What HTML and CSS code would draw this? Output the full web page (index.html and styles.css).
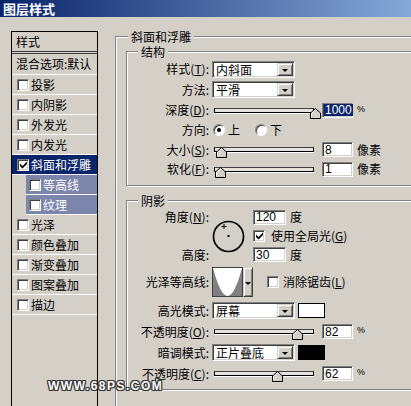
FILE: index.html
```html
<!DOCTYPE html>
<html lang="zh-CN">
<head>
<meta charset="utf-8">
<title>图层样式</title>
<link rel="stylesheet" href="styles.css">
</head>
<body>
<div class="window">
  <div class="titlebar">图层样式</div>
  <div class="client">
    <div class="stylelist">
      <div class="list-head">样式</div>
      <div class="list-blend">混合选项:默认</div>
      <div class="item"><span class="cb"></span>投影</div>
      <div class="item"><span class="cb"></span>内阴影</div>
      <div class="item"><span class="cb"></span>外发光</div>
      <div class="item"><span class="cb"></span>内发光</div>
      <div class="item selected"><span class="cb"><svg width="7" height="8" viewBox="0 0 7 8"><path d="M0 2.5L2.5 5L7 0.5V3L2.5 7.5L0 5Z" fill="#000"/></svg></span>斜面和浮雕</div>
      <div class="item sub"><span class="cb"></span>等高线</div>
      <div class="item sub"><span class="cb"></span>纹理</div>
      <div class="item"><span class="cb"></span>光泽</div>
      <div class="item"><span class="cb"></span>颜色叠加</div>
      <div class="item"><span class="cb"></span>渐变叠加</div>
      <div class="item"><span class="cb"></span>图案叠加</div>
      <div class="item"><span class="cb"></span>描边</div>
    </div>
    <fieldset class="group outer">
      <legend>斜面和浮雕</legend>
      <fieldset class="group inner">
        <legend>结构</legend>
        <div class="form structure">
          <div class="row"><span class="label">样式(<u>T</u>):</span><div class="select"><span class="val">内斜面</span><span class="btn"></span></div></div>
          <div class="row"><span class="label">方法:</span><div class="select"><span class="val">平滑</span><span class="btn"></span></div></div>
          <div class="row"><span class="label">深度(<u>D</u>):</span>
            <div class="slider"><div class="track"></div><div class="rail"><span class="thumb" style="left:99%"><svg width="11" height="11" viewBox="0 0 11 11"><path d="M0.5 10.5V5L5.5 0.5L10.5 5V10.5Z" fill="#d4d0c8" stroke="#000"/><path d="M1.5 9.5V5.4L5.5 1.8" fill="none" stroke="#fff"/></svg></span></div></div>
            <span class="num"><span class="hl">1000</span></span><span class="unit pct">%</span></div>
          <div class="row"><span class="label">方向:</span><span class="radio on"></span><span class="opt">上</span><span class="radio second"></span><span class="opt">下</span></div>
          <div class="row"><span class="label">大小(<u>S</u>):</span>
            <div class="slider"><div class="track"></div><div class="rail"><span class="thumb" style="left:3%"><svg width="11" height="11" viewBox="0 0 11 11"><path d="M0.5 10.5V5L5.5 0.5L10.5 5V10.5Z" fill="#d4d0c8" stroke="#000"/><path d="M1.5 9.5V5.4L5.5 1.8" fill="none" stroke="#fff"/></svg></span></div></div>
            <span class="num">8</span><span class="unit">像素</span></div>
          <div class="row"><span class="label">软化(<u>F</u>):</span>
            <div class="slider"><div class="track"></div><div class="rail"><span class="thumb" style="left:2%"><svg width="11" height="11" viewBox="0 0 11 11"><path d="M0.5 10.5V5L5.5 0.5L10.5 5V10.5Z" fill="#d4d0c8" stroke="#000"/><path d="M1.5 9.5V5.4L5.5 1.8" fill="none" stroke="#fff"/></svg></span></div></div>
            <span class="num">1</span><span class="unit">像素</span></div>
        </div>
      </fieldset>
      <fieldset class="group inner shadow">
        <legend>阴影</legend>
        <div class="form shading">
          <div class="angle">
            <span class="label a1">角度(<u>N</u>):</span>
            <svg class="dial" width="33" height="33" viewBox="0 0 33 33"><circle cx="16.5" cy="16.5" r="15" fill="none" stroke="#000" stroke-width="1.7"/><rect x="15.5" y="15" width="2" height="2" fill="#000"/><path d="M12 4v5M9.5 6.5h5" stroke="#000" stroke-width="1"/></svg>
            <div class="ctl c1"><span class="num wide">120</span><span class="unit">度</span></div>
            <div class="ctl c2"><span class="cb"><svg width="7" height="8" viewBox="0 0 7 8"><path d="M0 2.5L2.5 5L7 0.5V3L2.5 7.5L0 5Z" fill="#000"/></svg></span><span class="cbtext">使用全局光(<u>G</u>)</span></div>
            <span class="label a3">高度:</span>
            <div class="ctl c3"><span class="num wide">30</span><span class="unit">度</span></div>
          </div>
          <div class="row"><span class="label">光泽等高线:</span>
            <div class="contour"><svg width="31" height="30" viewBox="0 0 31 30"><rect x="0.5" y="0.5" width="30" height="29" fill="#808080" stroke="#404040"/><path d="M1 1Q8.5 29 15.5 29Q22.5 29 30 1Z" fill="#fff"/></svg><span class="cbtn"></span></div>
            <span class="cb aa"></span><span class="cbtext">消除锯齿(<u>L</u>)</span></div>
          <div class="row"><span class="label">高光模式:</span><div class="select"><span class="val">屏幕</span><span class="btn"></span></div><span class="swatch white"></span></div>
          <div class="row"><span class="label">不透明度(<u>O</u>):</span>
            <div class="slider"><div class="track"></div><div class="rail"><span class="thumb" style="left:81%"><svg width="11" height="11" viewBox="0 0 11 11"><path d="M0.5 10.5V5L5.5 0.5L10.5 5V10.5Z" fill="#d4d0c8" stroke="#000"/><path d="M1.5 9.5V5.4L5.5 1.8" fill="none" stroke="#fff"/></svg></span></div></div>
            <span class="num">82</span><span class="unit pct">%</span></div>
          <div class="row"><span class="label">暗调模式:</span><div class="select"><span class="val">正片叠底</span><span class="btn"></span></div><span class="swatch black"></span></div>
          <div class="row"><span class="label">不透明度(<u>C</u>):</span>
            <div class="slider"><div class="track"></div><div class="rail"><span class="thumb" style="left:60%"><svg width="11" height="11" viewBox="0 0 11 11"><path d="M0.5 10.5V5L5.5 0.5L10.5 5V10.5Z" fill="#d4d0c8" stroke="#000"/><path d="M1.5 9.5V5.4L5.5 1.8" fill="none" stroke="#fff"/></svg></span></div></div>
            <span class="num">62</span><span class="unit pct">%</span></div>
        </div>
      </fieldset>
    </fieldset>
  </div>
  <div class="watermark">WWW.68PS.COM</div>
</div>
</body>
</html>
```
FILE: styles.css
```css
* { box-sizing: border-box; }
html, body { margin: 0; padding: 0; overflow: hidden; }
body {
  background: #d4d0c8;
  font-family: "Noto Sans CJK SC", "Noto Sans", sans-serif;
  font-size: 12px;
  line-height: 14px;
  color: #000;
}
u { text-decoration: underline; text-underline-offset: 1px; }

.window { position: relative; width: 411px; height: 406px; overflow: hidden; background: #d4d0c8; }

.titlebar {
  height: 17px;
  padding-left: 3px;
  background: linear-gradient(to right, #0a246a, #86a8d8);
  color: #fff;
  font-weight: bold;
  font-size: 13px;
  line-height: 17px;
}

.client { display: flex; align-items: flex-start; padding: 12px 0 0 11px; }

/* left style list */
.stylelist {
  flex: none;
  width: 87px;
  height: 400px;
  margin-top: 2px;
  border: 1px solid #000;
  border-bottom: none;
}
.list-head {
  height: 22px;
  padding-left: 4px;
  line-height: 19px;
  border-bottom: 3px double #404040;
}
.list-blend {
  height: 21px;
  padding-left: 4px;
  line-height: 20px;
  border-bottom: 1px solid #fff;
  white-space: nowrap;
}
.item {
  display: flex;
  align-items: center;
  height: 20px;
  padding-left: 5px;
  border-bottom: 1px solid #fff;
  white-space: nowrap;
}
.item.selected { background: #0a246a; color: #fff; }
.item.sub { margin-left: 14px; padding-left: 3px; background: #7c86ad; color: #fff; }

.cb {
  flex: none;
  display: flex;
  align-items: center;
  justify-content: center;
  width: 12px;
  height: 12px;
  margin-right: 2px;
  background: #fff;
  border: 1px solid;
  border-color: #808080 #fff #fff #808080;
  box-shadow: inset 1px 1px #404040, inset -1px -1px #d4d0c8;
}

/* group boxes */
.group {
  margin: 0;
  padding: 0;
  min-width: 0;
  border: 1px solid #808080;
  box-shadow: inset 1px 1px #fff, 1px 1px #fff;
}
.group > legend {
  padding: 0 3px;
  height: 15px;
  line-height: 15px;
  background: #d4d0c8;
}
.outer {
  flex: none;
  width: 330px;
  margin-left: 17px;
  padding: 0 0 60px 10px;
}
.outer > legend { margin-left: 2px; }
.inner { padding: 0 0 6px 1px; }
.inner > legend { margin-left: 10px; }
.shadow { margin-top: 7px; padding-bottom: 5px; }

.form { display: grid; }
.structure { grid-template-rows: 20px 21px 20px 20px 19px 20px; }
.shading { grid-template-rows: 56px 36px 21px 21px 21px 21px; }

.row { display: flex; align-items: center; }
.label {
  flex: none;
  width: 84px;
  padding-right: 3px;
  text-align: right;
  white-space: nowrap;
}

/* combo box */
.select {
  flex: none;
  display: flex;
  align-items: center;
  width: 83px;
  height: 17px;
  padding: 1px;
  background: #fff;
  border: 1px solid;
  border-color: #808080 #fff #fff #808080;
  box-shadow: inset 1px 1px #404040, inset -1px -1px #d4d0c8;
}
.select .val { flex: 1; padding-left: 2px; line-height: 13px; white-space: nowrap; }
.btn, .cbtn {
  flex: none;
  display: flex;
  align-items: center;
  justify-content: center;
  width: 16px;
  height: 13px;
  background: #d4d0c8;
  border: 1px solid;
  border-color: #d4d0c8 #404040 #404040 #d4d0c8;
  box-shadow: inset 1px 1px #fff, inset -1px -1px #808080;
}
.btn::after, .cbtn::after {
  content: "";
  margin-top: 2px;
  border-left: 3px solid transparent;
  border-right: 3px solid transparent;
  border-top: 3px solid #000;
}

/* edit boxes */
.num {
  flex: none;
  display: flex;
  align-items: center;
  width: 31px;
  height: 15px;
  margin-left: 8px;
  padding-left: 2px;
  background: #fff;
  border: 1px solid;
  border-color: #808080 #fff #fff #808080;
  box-shadow: inset 1px 1px #404040, inset -1px -1px #d4d0c8;
  font-family: "Liberation Sans", "Noto Sans", sans-serif;
  font-size: 12px;
  line-height: 12px;
}
.num.wide { width: 33px; margin-left: 0; }
.hl { background: #0a246a; color: #fff; padding: 0 1px; margin-left: -1px; line-height: 12px; }
.unit { margin-left: 4px; white-space: nowrap; }
.pct { font-family: "Liberation Sans", sans-serif; font-size: 9px; margin-top: -3px; }

/* trackbar */
.slider {
  position: relative;
  flex: none;
  width: 102px;
  height: 11px;
  margin-top: 6px;
}
.track {
  margin-left: 2px;
  height: 5px;
  background: #e6e3dd;
  border: 1px solid #000;
  border-top-color: #404040;
  box-shadow: 0 1px #fff;
}
.rail { position: absolute; left: 6px; right: -2px; top: 0; height: 11px; }
.thumb { position: absolute; top: 0; width: 11px; height: 11px; margin-left: -5px; display: block; }
.thumb svg { display: block; }

/* radio */
.radio {
  flex: none;
  display: flex;
  align-items: center;
  justify-content: center;
  width: 12px;
  height: 12px;
  margin-left: 1px;
  border-radius: 50%;
  background: #fff;
  border: 1px solid;
  border-color: #808080 #fff #fff #808080;
  box-shadow: inset 1px 1px #404040;
}
.radio.on::after { content: ""; width: 4px; height: 4px; border-radius: 50%; background: #000; }
.radio.second { margin-left: 15px; }
.opt { margin-left: 3px; }

/* angle block */
.angle {
  display: grid;
  grid-template-columns: 84px 41px auto;
  grid-template-rows: 18px 19px 19px;
  align-items: center;
}
.a1 { grid-column: 1; grid-row: 1; }
.a3 { grid-column: 1; grid-row: 3; }
.dial { grid-column: 2; grid-row: 1 / span 3; display: block; }
.ctl { display: flex; align-items: center; grid-column: 3; }
.c1 { grid-row: 1; }
.c2 { grid-row: 2; }
.c3 { grid-row: 3; }
.c2 .cb { margin-right: 6px; }
.cbtext { white-space: nowrap; }

/* contour */
.contour { flex: none; display: flex; }
.contour svg { display: block; }
.cbtn { width: 10px; height: 30px; }
.cb.aa { margin-left: 14px; margin-right: 4px; }

.swatch { flex: none; width: 27px; height: 15px; margin-left: 3px; border: 1px solid #000; }
.swatch.white { background: #fff; }
.swatch.black { background: #000; }

.watermark {
  position: absolute;
  left: 48px;
  top: 379px;
  font-family: "Liberation Sans", Arial, sans-serif;
  font-weight: bold;
  font-size: 12px;
  line-height: 14px;
  letter-spacing: 1.5px;
  color: #fff;
  text-shadow: 1px 0 #333, -1px 0 #333, 0 1px #333, 0 -1px #333, 1px 1px #333, -1px -1px #333, 1px -1px #333, -1px 1px #333;
}
```
